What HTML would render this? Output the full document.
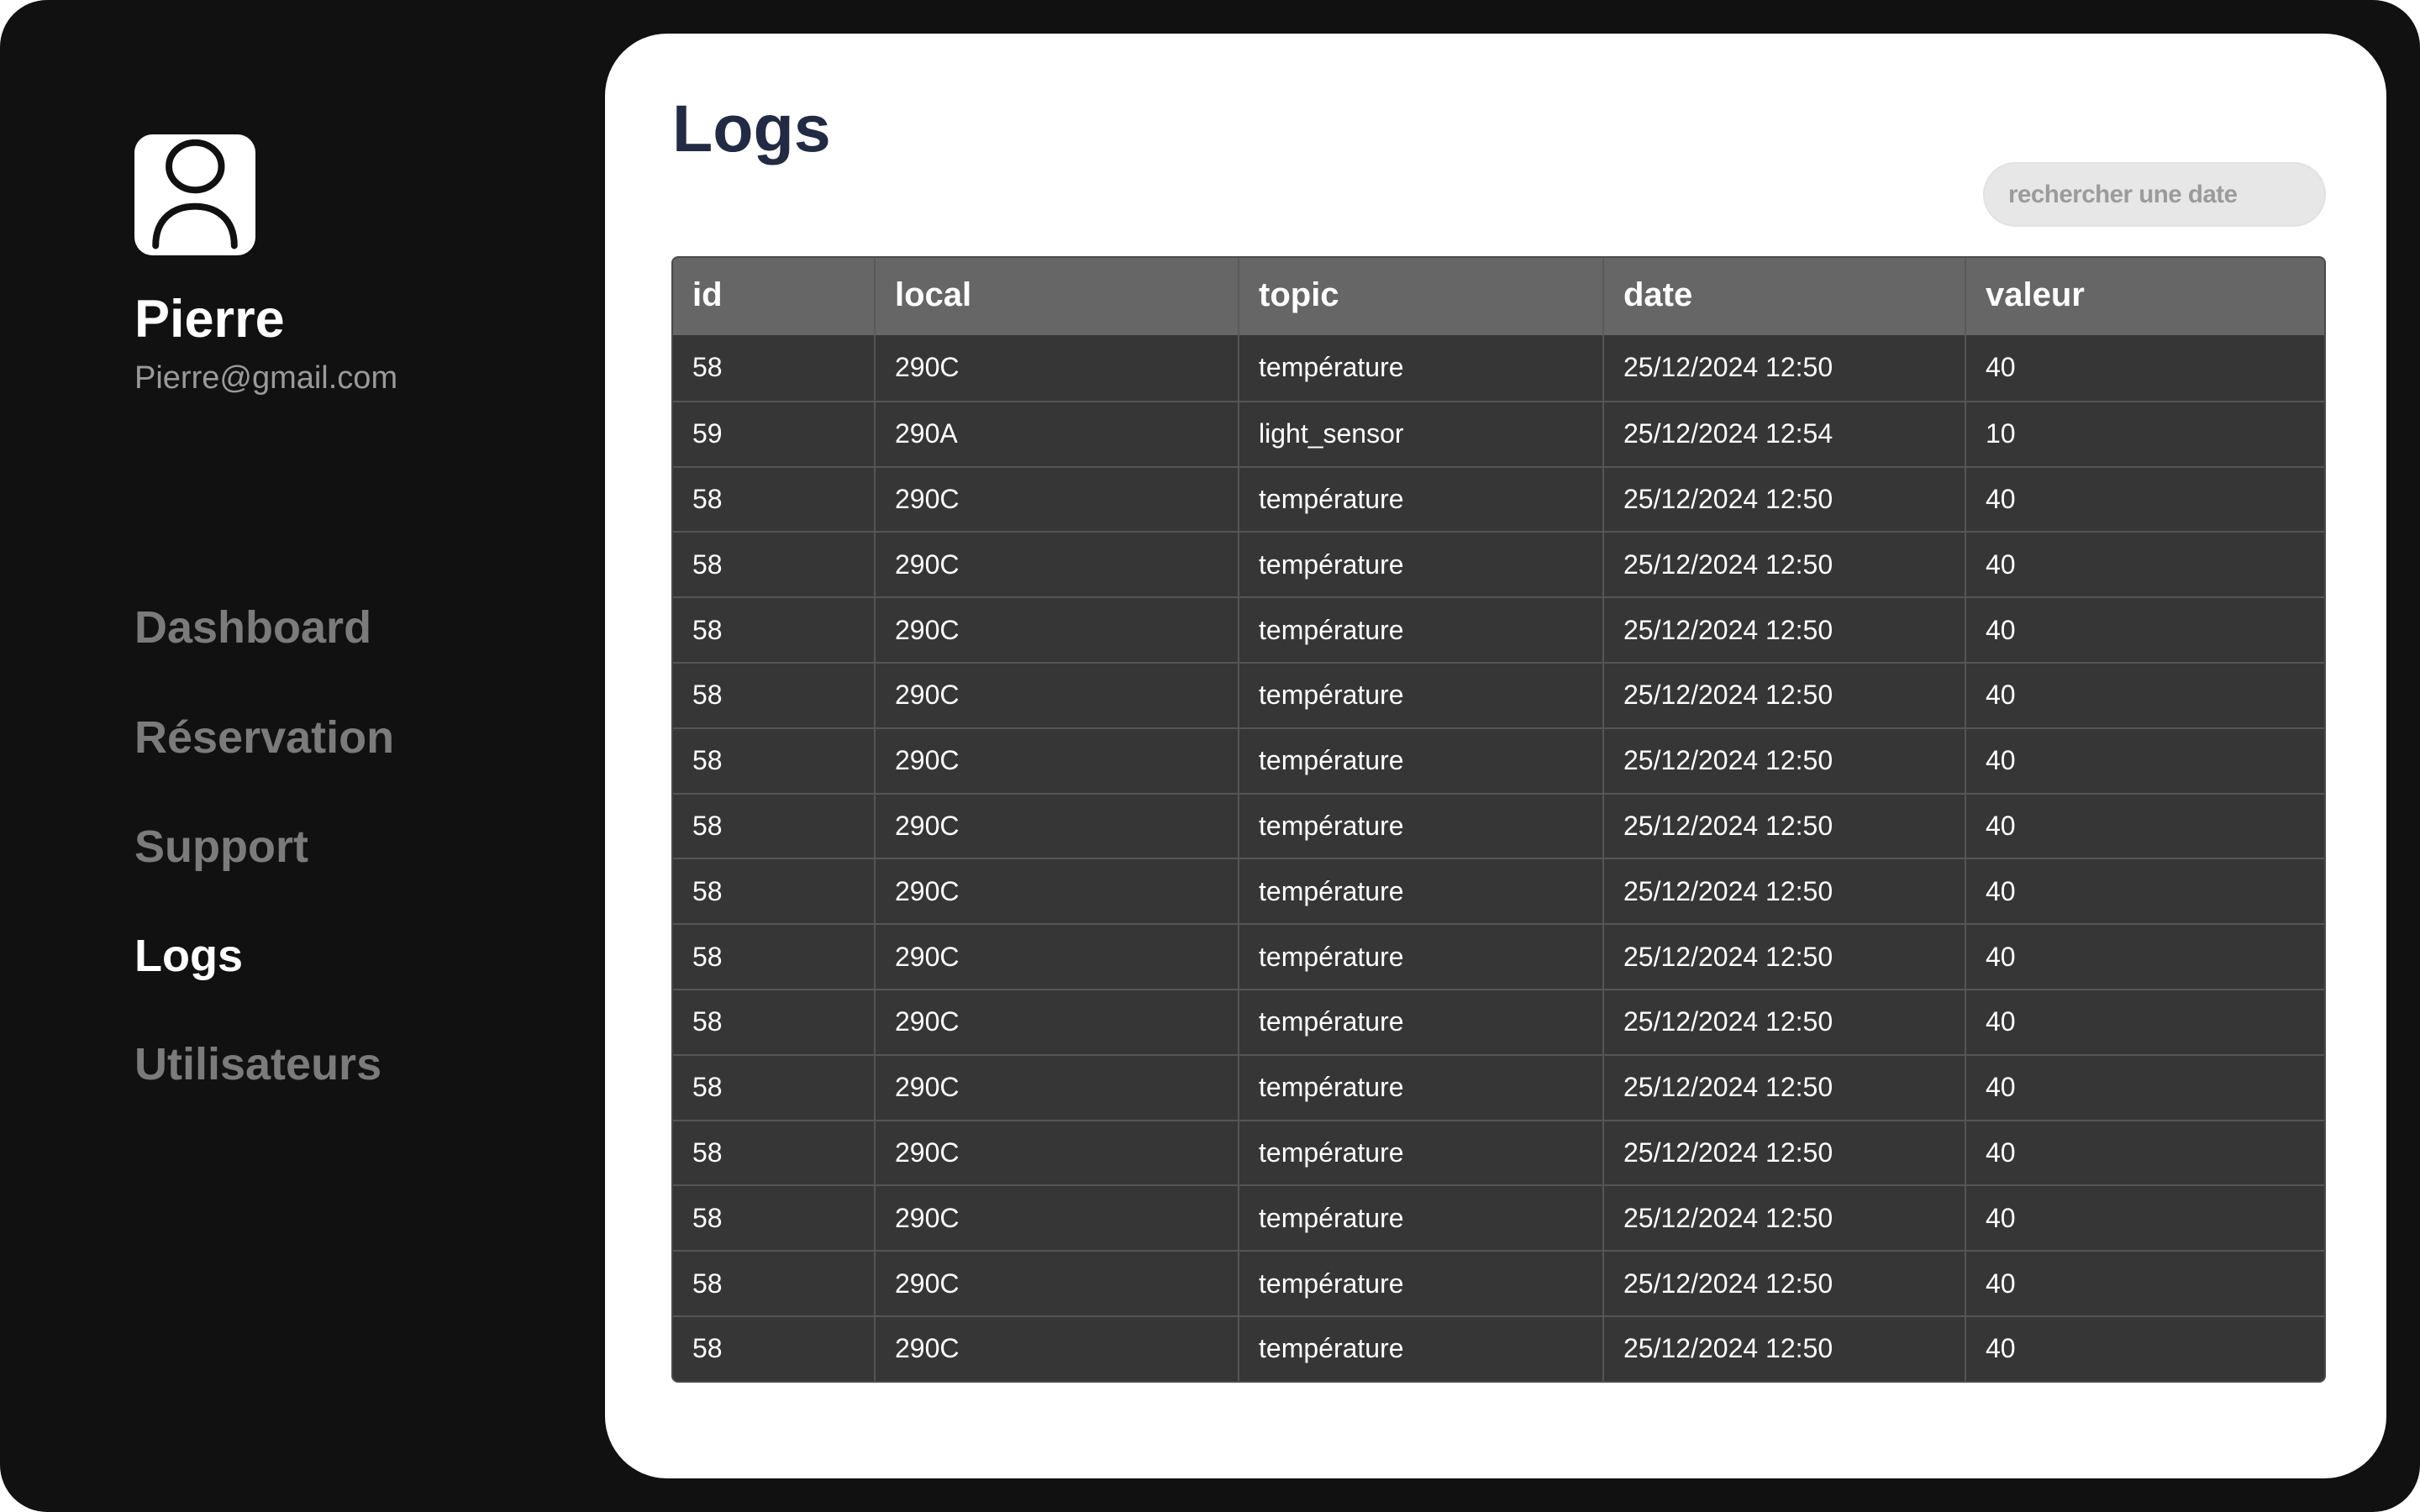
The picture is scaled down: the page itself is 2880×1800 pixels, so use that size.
<!DOCTYPE html>
<html><head><meta charset="utf-8"><style>
*{margin:0;padding:0;box-sizing:border-box}
html,body{width:2880px;height:1800px;background:#fff;overflow:hidden}
.frame{position:absolute;left:0;top:0;width:2880px;height:1800px;background:#111;border-radius:56px}
.side{font-family:"Liberation Sans",sans-serif;position:absolute}
.panel{position:absolute;left:720px;top:40px;width:2120px;height:1720px;background:#fff;border-radius:74px}
.nav{position:absolute;left:160px;font-family:"Liberation Sans",sans-serif;font-weight:bold;font-size:54px;color:#7b7b7b;line-height:1}
.tbl{position:absolute;left:799px;top:305px;width:1969px;font-family:"Liberation Sans",sans-serif;color:#fff;border:2px solid #4a4a4a;border-radius:8px;overflow:hidden;background:#363636}
.row{display:flex;height:77.8px;border-top:2px solid #555}
.hdr{height:92px;background:#666;border-top:none}
.c{display:flex;align-items:center;padding-left:23px;border-left:2px solid #555;font-size:32px}
.c:first-child{border-left:none}
.hdr .c{font-size:40px;font-weight:bold;border-left-color:#5a5a5a;padding-bottom:4px}
.w1{width:239px}.w2{width:433px}.w3{width:434px}.w4{width:431px}.w5{flex:1}
</style></head><body>
<div class="frame"></div>
<div class="panel"></div>
<svg style="position:absolute;left:160px;top:160px" width="144" height="144" viewBox="0 0 100 100">
<rect width="100" height="100" rx="15" fill="#fff"/>
<ellipse cx="50.2" cy="26.4" rx="21.7" ry="19.6" fill="none" stroke="#111" stroke-width="5.5"/>
<path d="M17.5 92 C17.5 70 32 59.5 50 59.5 C68 59.5 82.5 70 82.5 92" fill="none" stroke="#111" stroke-width="5.5" stroke-linecap="round"/>
</svg>
<div class="side" style="left:160px;top:349px;font-size:63px;font-weight:bold;color:#fff;line-height:1">Pierre</div>
<div class="side" style="left:160px;top:431px;font-size:38px;color:#9a9a9a;line-height:1">Pierre@gmail.com</div>
<div class="nav" style="top:720px">Dashboard</div>
<div class="nav" style="top:851px">Réservation</div>
<div class="nav" style="top:981px">Support</div>
<div class="nav" style="top:1111px;color:#fff">Logs</div>
<div class="nav" style="top:1240px">Utilisateurs</div>
<div style="position:absolute;left:800px;top:113px;font-family:'Liberation Sans',sans-serif;font-weight:bold;font-size:79px;color:#232a44;line-height:1">Logs</div>
<div style="position:absolute;left:2360px;top:193px;width:408px;height:77px;border-radius:39px;background:#e7e7e8;border:2px solid #e2e2e3;font-family:'Liberation Sans',sans-serif;font-size:29.5px;color:#9b9b9b;font-weight:bold;display:flex;align-items:center;padding-left:28px;letter-spacing:-0.5px">rechercher une date</div>
<div class="tbl">
<div class="row hdr"><div class="c w1">id</div><div class="c w2">local</div><div class="c w3">topic</div><div class="c w4">date</div><div class="c w5">valeur</div></div>
<div class="row" style="border-top:none"><div class="c w1">58</div><div class="c w2">290C</div><div class="c w3">température</div><div class="c w4">25/12/2024 12:50</div><div class="c w5">40</div></div>
<div class="row"><div class="c w1">59</div><div class="c w2">290A</div><div class="c w3">light_sensor</div><div class="c w4">25/12/2024 12:54</div><div class="c w5">10</div></div>
<div class="row"><div class="c w1">58</div><div class="c w2">290C</div><div class="c w3">température</div><div class="c w4">25/12/2024 12:50</div><div class="c w5">40</div></div>
<div class="row"><div class="c w1">58</div><div class="c w2">290C</div><div class="c w3">température</div><div class="c w4">25/12/2024 12:50</div><div class="c w5">40</div></div>
<div class="row"><div class="c w1">58</div><div class="c w2">290C</div><div class="c w3">température</div><div class="c w4">25/12/2024 12:50</div><div class="c w5">40</div></div>
<div class="row"><div class="c w1">58</div><div class="c w2">290C</div><div class="c w3">température</div><div class="c w4">25/12/2024 12:50</div><div class="c w5">40</div></div>
<div class="row"><div class="c w1">58</div><div class="c w2">290C</div><div class="c w3">température</div><div class="c w4">25/12/2024 12:50</div><div class="c w5">40</div></div>
<div class="row"><div class="c w1">58</div><div class="c w2">290C</div><div class="c w3">température</div><div class="c w4">25/12/2024 12:50</div><div class="c w5">40</div></div>
<div class="row"><div class="c w1">58</div><div class="c w2">290C</div><div class="c w3">température</div><div class="c w4">25/12/2024 12:50</div><div class="c w5">40</div></div>
<div class="row"><div class="c w1">58</div><div class="c w2">290C</div><div class="c w3">température</div><div class="c w4">25/12/2024 12:50</div><div class="c w5">40</div></div>
<div class="row"><div class="c w1">58</div><div class="c w2">290C</div><div class="c w3">température</div><div class="c w4">25/12/2024 12:50</div><div class="c w5">40</div></div>
<div class="row"><div class="c w1">58</div><div class="c w2">290C</div><div class="c w3">température</div><div class="c w4">25/12/2024 12:50</div><div class="c w5">40</div></div>
<div class="row"><div class="c w1">58</div><div class="c w2">290C</div><div class="c w3">température</div><div class="c w4">25/12/2024 12:50</div><div class="c w5">40</div></div>
<div class="row"><div class="c w1">58</div><div class="c w2">290C</div><div class="c w3">température</div><div class="c w4">25/12/2024 12:50</div><div class="c w5">40</div></div>
<div class="row"><div class="c w1">58</div><div class="c w2">290C</div><div class="c w3">température</div><div class="c w4">25/12/2024 12:50</div><div class="c w5">40</div></div>
<div class="row"><div class="c w1">58</div><div class="c w2">290C</div><div class="c w3">température</div><div class="c w4">25/12/2024 12:50</div><div class="c w5">40</div></div>
</div>
</body></html>
